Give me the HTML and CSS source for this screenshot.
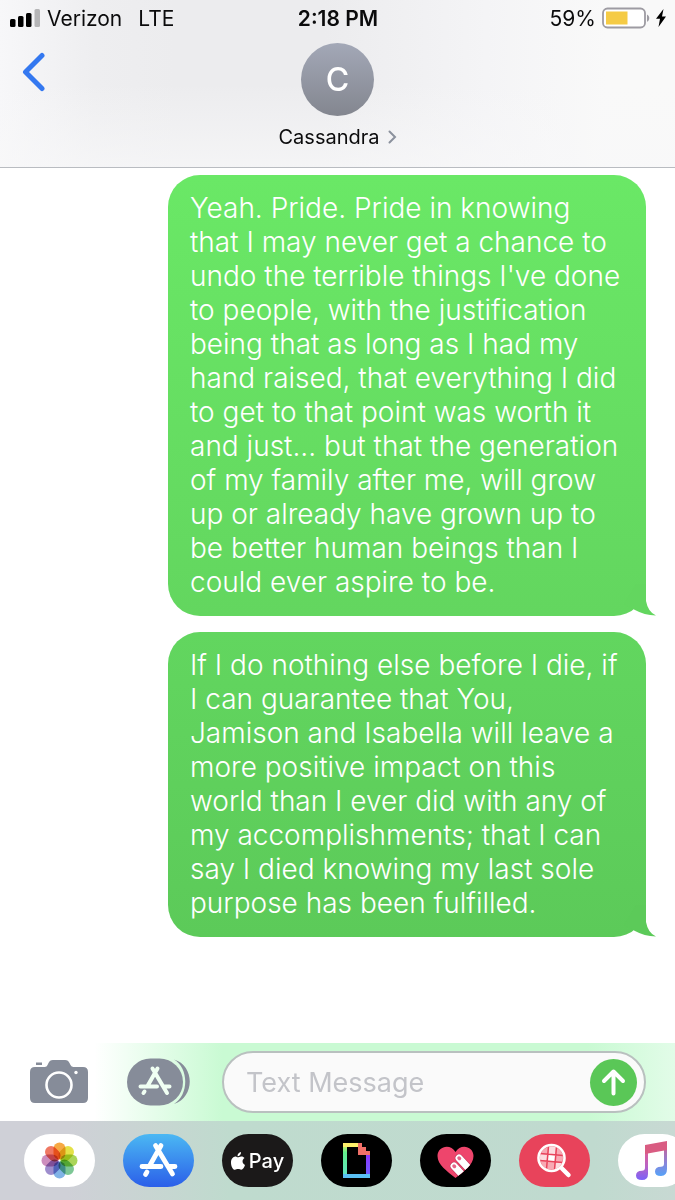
FILE: index.html
```html
<!DOCTYPE html>
<html lang="en">
<head>
    <meta charset="UTF-8">
    <meta name="viewport" content="width=device-width, initial-scale=1.0">
    <title>Cassandra</title>
    <link rel="stylesheet" href="styles.css">
</head>
<body>
    <header class="header">
        <div class="status-bar">
            <div class="status-left">
                <svg class="signal" viewBox="0 0 31 18" aria-hidden="true">
                    <rect x="0" y="10" width="5.500" height="8" rx="1.500"/>
                    <rect x="8" y="7" width="5.500" height="11" rx="1.500"/>
                    <rect x="16" y="4" width="5.500" height="14" rx="1.500"/>
                    <rect x="24.500" y="0" width="5.500" height="18" rx="1.500" fill="#b5b5b7"/>
                </svg>
                <span>Verizon</span>
                <span class="network">LTE</span>
            </div>
            <div class="status-time">2:18 PM</div>
            <div class="status-right">
                <span>59%</span>
                <svg class="battery" viewBox="0 0 48 22" aria-hidden="true">
                    <rect x="1" y="1.500" width="42" height="19" rx="4.500" fill="#fff" stroke="#9d9ba2" stroke-width="1.800"/>
                    <rect x="4" y="4.500" width="21.500" height="13" fill="#f5cb45"/>
                    <path d="M45 7.500c3 1.300 3 6 0 7.300z" fill="#9d9ba2"/>
                </svg>
                <svg class="bolt" viewBox="0 0 10 18" aria-hidden="true">
                    <path d="M7.500 0 0 9.800h4L2.500 18 10 7.500H6z"/>
                </svg>
            </div>
        </div>
        <div class="nav">
            <button class="back" type="button" aria-label="Back">
                <svg viewBox="0 0 24 40"><path d="M20 3.500 3.500 20 20 36.500"/></svg>
            </button>
            <a class="contact" href="#">
                <span class="avatar">C</span>
                <span class="contact-name">Cassandra
                    <svg class="chevron" viewBox="0 0 9 14" aria-hidden="true"><path d="M1.500 1.500 7 7l-5.500 5.500"/></svg>
                </span>
            </a>
        </div>
    </header>

    <main class="thread">
        <div class="bubble bubble-first">
            Yeah. Pride. Pride in knowing<br>
            that I may never get a chance to<br>
            undo the terrible things I've done<br>
            to people, with the justification<br>
            being that as long as I had my<br>
            hand raised, that everything I did<br>
            to get to that point was worth it<br>
            and just... but that the generation<br>
            of my family after me, will grow<br>
            up or already have grown up to<br>
            be better human beings than I<br>
            could ever aspire to be.
            <svg class="tail" viewBox="0 0 32 32" aria-hidden="true"><path d="M12 0H22V17Q24 28 32 31.500Q20 31 11 26L0 20z"/></svg>
        </div>
        <div class="bubble bubble-second">
            If I do nothing else before I die, if<br>
            I can guarantee that You,<br>
            Jamison and Isabella will leave a<br>
            more positive impact on this<br>
            world than I ever did with any of<br>
            my accomplishments; that I can<br>
            say I died knowing my last sole<br>
            purpose has been fulfilled.
            <svg class="tail" viewBox="0 0 32 32" aria-hidden="true"><path d="M12 0H22V17Q24 28 32 31.500Q20 31 11 26L0 20z"/></svg>
        </div>
    </main>

    <form class="composer">
        <button class="tool camera" type="button" aria-label="Camera">
            <svg viewBox="0 0 58 44">
                <rect x="6" y="2.500" width="6" height="2.500" fill="#868c99"/>
                <path fill="#868c99" d="M5 7h9c3 0 3-1 4.500-4 1-2 2-3 4.500-3h12c2.500 0 3.500 1 4.500 3 1.500 3 2 4 5 4H53q5 0 5 5v26q0 5-5 5H5q-5 0-5-5V12q0-5 5-5z"/>
                <circle cx="29" cy="25" r="12.500" fill="none" stroke="#fff" stroke-width="2.600"/>
                <circle cx="46" cy="12.500" r="1.700" fill="#fff"/>
            </svg>
        </button>
        <button class="tool apps" type="button" aria-label="Apps">
            <svg viewBox="0 0 63 48">
                <path d="M47 1.500c21 6 21 38 0 44.500 15-9 15-36 0-44.500z" fill="#868c99"/>
                <rect x="0" y="0.500" width="56" height="47" rx="23.500" fill="#868c99"/>
                <g fill="none" stroke="#f0fff3" stroke-width="4" stroke-linecap="round">
                    <path d="M25.500 10.500 40 35M30.500 10.500 20.500 28M13.500 28.500H30M37 28.500h5.500M17.500 33.500l-1 1.500"/>
                </g>
            </svg>
        </button>
        <div class="message-box">
            <input class="message-input" type="text" placeholder="Text Message" aria-label="Text Message">
            <button class="send" type="submit" aria-label="Send">
                <svg viewBox="0 0 47 47"><path d="M23.500 34.500V12.500M14 22l9.500-9.500L33 22"/></svg>
            </button>
        </div>
    </form>

    <nav class="app-strip">
        <a class="app photos" href="#" aria-label="Photos">
            <svg viewBox="0 0 71 53">
                <g transform="translate(35.500 26.500)">
                    <rect class="petal" x="-6" y="-18" width="12" height="17" rx="6" fill="#f59a23"/>
                    <rect class="petal" x="-6" y="-18" width="12" height="17" rx="6" fill="#dfdc28" transform="rotate(45)"/>
                    <rect class="petal" x="-6" y="-18" width="12" height="17" rx="6" fill="#9bce3c" transform="rotate(90)"/>
                    <rect class="petal" x="-6" y="-18" width="12" height="17" rx="6" fill="#66bd82" transform="rotate(135)"/>
                    <rect class="petal" x="-6" y="-18" width="12" height="17" rx="6" fill="#6ba6e2" transform="rotate(180)"/>
                    <rect class="petal" x="-6" y="-18" width="12" height="17" rx="6" fill="#8d79c5" transform="rotate(225)"/>
                    <rect class="petal" x="-6" y="-18" width="12" height="17" rx="6" fill="#c47ab2" transform="rotate(270)"/>
                    <rect class="petal" x="-6" y="-18" width="12" height="17" rx="6" fill="#ed6047" transform="rotate(315)"/>
                </g>
            </svg>
        </a>
        <a class="app store" href="#" aria-label="App Store">
            <svg viewBox="0 0 71 53">
                <path fill="none" stroke="#fff" stroke-width="4.800" stroke-linecap="round" d="M32.500 11.500 49.500 40M38 11.500 26.500 32M19 32.500h19M45 32.500h7M24 38l-1.500 2.500"/>
            </svg>
        </a>
        <a class="app pay" href="#" aria-label="Apple Pay">
            <svg class="apple" viewBox="0 0 14 18" aria-hidden="true">
                <path d="M10 0c.2 2.400-1.500 4.200-3.500 4.200C6.300 2 8 .3 10 0zM6.900 5.300c.8 0 1.900-1 3.500-.9 1.300 0 2.500.7 3.100 1.700-2.900 1.700-2.300 5.700.5 6.900-.7 2.200-2.200 4.700-3.700 4.800-1.200 0-1.600-.7-3.200-.7-1.500 0-2 .7-3.200.7C1.800 17.800 0 14 0 10.700 0 6.800 2.300 4.600 4.300 4.500c1 0 2 .8 2.600.8z"/>
            </svg>
            <span>Pay</span>
        </a>
        <a class="app giphy" href="#" aria-label="Giphy">
            <svg viewBox="0 0 71 53" shape-rendering="crispEdges">
                <defs>
                    <linearGradient id="giphy-left" x2="0" y2="1"><stop stop-color="#fff35c"/><stop offset=".3" stop-color="#63f08c"/><stop offset="1" stop-color="#5fe3c0"/></linearGradient>
                    <linearGradient id="giphy-right" x2="0" y2="1"><stop stop-color="#8b36ff"/><stop offset="1" stop-color="#6f5cff"/></linearGradient>
                </defs>
                <path d="M22 9h4v31h-4z" fill="url(#giphy-left)"/>
                <path d="M22 9h15v4H22z" fill="#fff06a"/>
                <path d="M45 21h4v19h-4z" fill="url(#giphy-right)"/>
                <path d="M22 40h27v4H22z" fill="#5ac0f5"/>
                <path d="M37 9h4v4h4v4h4v4H37z" fill="#f06f68"/>
            </svg>
        </a>
        <a class="app heart" href="#" aria-label="Digital Touch">
            <svg viewBox="0 0 71 53">
                <defs>
                    <clipPath id="heart-clip"><path d="M35.500 44C27 37 17.500 31 17.500 22c0-10 13-13 18-4 5-9 18-6 18 4 0 9-9.500 15-18 22z"/></clipPath>
                </defs>
                <g clip-path="url(#heart-clip)">
                    <path fill="#ee456c" d="M0 0h71v53H0z"/>
                    <g fill="none" stroke-linecap="round">
                        <path stroke="#b72f55" stroke-width="8" d="m39 24 15 16M34 32l15 16"/>
                        <path stroke="#fff" stroke-width="7" d="m39 24 15 16M34 32l15 16"/>
                        <path stroke="#e56488" stroke-width="3.500" d="m39 24 .5.500M34 32l.5.500"/>
                    </g>
                </g>
            </svg>
        </a>
        <a class="app search" href="#" aria-label="Images">
            <svg viewBox="0 0 71 53">
                <defs><clipPath id="lens-clip"><circle cx="32.500" cy="24" r="11.500"/></clipPath></defs>
                <g clip-path="url(#lens-clip)">
                    <g transform="rotate(5 32.500 24)">
                        <path fill="#f8a9b4" d="M20 12h25v25H20z"/>
                        <path fill="#fff" d="M29 21h7v6h-7z"/>
                        <path fill="#fcdce0" d="M29 12h7v8h-7zM20 21h8v6h-8zM37 28h6v7h-6z"/>
                        <path fill="none" stroke="#e8435b" stroke-width="1.500" d="M28.500 11v26M36.500 11v26M20 20.500h25M20 27.500h25"/>
                    </g>
                </g>
                <circle cx="32.500" cy="24" r="13" fill="none" stroke="#fff" stroke-width="2.600"/>
                <path fill="none" stroke="#fff" stroke-width="4.500" stroke-linecap="round" d="m43 34.500 6.500 6.500"/>
            </svg>
        </a>
        <a class="app music" href="#" aria-label="Music">
            <svg viewBox="0 0 71 53">
                <defs>
                    <linearGradient id="note-left" x2="0" y2="1"><stop stop-color="#ec5b83"/><stop offset=".6" stop-color="#b863c6"/><stop offset="1" stop-color="#7a62f8"/></linearGradient>
                    <linearGradient id="note-right" x2="0" y2="1"><stop stop-color="#d65b88"/><stop offset=".6" stop-color="#8b83d8"/><stop offset="1" stop-color="#56a2f8"/></linearGradient>
                </defs>
                <path fill="url(#note-left)" d="M27 12h3v28q0 6-6 6-6 0-6-4.500 0-4.500 6-4.700 3 0 3-3z"/>
                <path fill="url(#note-right)" d="M46 8h3v27q0 7-6 7-6 0-6-4.500 0-4.500 6-4.700 3 0 3-3z"/>
                <path fill="#d95c82" d="m27 11 22-4v9l-22 4z"/>
            </svg>
        </a>
    </nav>
</body>
</html>
```

FILE: styles.css
```css
* {
    box-sizing: border-box;
}
body {
    margin: 0;
    min-height: 100vh;
    display: flex;
    flex-direction: column;
    overflow-x: hidden;
    font-family: Inter, "Liberation Sans", sans-serif;
    background-color: #fff;
    color: #0b0b0c;
}
button {
    padding: 0;
    border: none;
    background: none;
    cursor: pointer;
}
a {
    color: inherit;
    text-decoration: none;
}
svg {
    display: block;
}

/* Header */
.header {
    padding-bottom: 18px;
    border-bottom: 1px solid #b9bcc1;
    background:
        linear-gradient(rgba(248, 248, 249, 0) 50%, rgba(248, 248, 249, 0.7)),
        linear-gradient(to right, #f7f7f9, #eeeef0 14%, #ececee 26%, #ececee 48%, #f4f4f6 72%, #f9f9f9 90%);
}
.status-bar {
    display: grid;
    grid-template-columns: 1fr auto 1fr;
    align-items: center;
    height: 36px;
    padding: 0 9px 0 10px;
    font-size: 21px;
}
.status-left,
.status-right {
    display: flex;
    align-items: center;
    gap: 6px;
}
.status-right {
    justify-content: flex-end;
}
.signal {
    width: 31px;
    height: 18px;
}
.network {
    margin-left: 10px;
}
.status-time {
    font-weight: 600;
}
.battery {
    width: 48px;
    height: 22px;
}
.bolt {
    width: 10px;
    height: 18px;
}
.nav {
    display: grid;
    grid-template-columns: 1fr auto 1fr;
    align-items: start;
    padding: 7px 22px 0;
}
.back {
    justify-self: start;
}
.back svg {
    width: 24px;
    height: 40px;
    margin-top: 9px;
    fill: none;
    stroke: #3478f0;
    stroke-width: 5;
    stroke-linecap: round;
    stroke-linejoin: round;
}
.contact {
    display: flex;
    flex-direction: column;
    align-items: center;
    gap: 9px;
}
.avatar {
    display: flex;
    align-items: center;
    justify-content: center;
    width: 73px;
    height: 73px;
    border-radius: 50%;
    background: linear-gradient(#a3a8b7, #83868f);
    color: #fff;
    font-size: 32px;
    font-weight: 500;
}
.contact-name {
    display: flex;
    align-items: center;
    gap: 8px;
    font-size: 20px;
    line-height: 24px;
}
.chevron {
    width: 9px;
    height: 14px;
    fill: none;
    stroke: #8b919d;
    stroke-width: 2;
    stroke-linecap: round;
}

/* Messages */
.thread {
    flex: 1;
    display: flex;
    flex-direction: column;
    align-items: flex-end;
    gap: 16px;
    padding: 7px 29px 20px;
}
.bubble {
    position: relative;
    width: 478px;
    max-width: 100%;
    padding: 16px 22px 17px;
    border-radius: 32px;
    color: #fff;
    font-size: 28px;
    font-weight: 300;
    line-height: 34px;
    white-space: nowrap;
}
.bubble-first {
    background: linear-gradient(#6ae866, #63d65f);
}
.bubble-second {
    background: linear-gradient(#62d65f, #5cca59);
}
.tail {
    position: absolute;
    right: -10px;
    bottom: 0;
    width: 32px;
    height: 32px;
}
.bubble-first .tail {
    fill: #63d65f;
}
.bubble-second .tail {
    fill: #5cca59;
}

/* Composer */
.composer {
    display: flex;
    align-items: center;
    padding: 8px 29px 8px 30px;
    background: linear-gradient(to right, #fff 14%, #e5fdea 23%, #c9fad3 33%, #c9fad3 87%, #e2fce8);
}
.tool {
    flex: none;
}
.camera svg {
    width: 58px;
    height: 44px;
}
.apps {
    margin: 0 32px 0 39px;
}
.apps svg {
    width: 63px;
    height: 48px;
}
.message-box {
    flex: 1;
    display: flex;
    align-items: center;
    min-width: 0;
    height: 62px;
    padding: 0 7px 0 22px;
    border: 2px solid #b9c0bf;
    border-radius: 31px;
    background-color: #fafafa;
}
.message-input {
    flex: 1;
    min-width: 0;
    padding: 0;
    border: none;
    outline: none;
    background: none;
    font-family: inherit;
    font-size: 27px;
}
.message-input::placeholder {
    color: #c3c4c9;
    opacity: 1;
}
.send {
    flex: none;
    width: 47px;
    height: 47px;
    border-radius: 50%;
    background-color: #5ac757;
}
.send svg {
    fill: none;
    stroke: #fff;
    stroke-width: 4;
    stroke-linecap: round;
    stroke-linejoin: round;
}

/* App strip */
.app-strip {
    display: flex;
    gap: 28px;
    height: 79px;
    padding: 13px 0 0 24px;
    overflow: hidden;
    background: linear-gradient(to right, #cfd0d7 10%, #c8d5d2 22%, #bfdbce 34%, #c0dacf 88%, #c8d9d3);
}
.app {
    flex: none;
    width: 71px;
    height: 53px;
    border-radius: 27px;
    background-color: #000;
}
.photos,
.music {
    background-color: #fff;
}
.petal {
    mix-blend-mode: multiply;
    opacity: 0.85;
}
.store {
    background: linear-gradient(#4bb8f3, #2b5fe9);
}
.pay {
    display: flex;
    align-items: center;
    justify-content: center;
    gap: 4px;
    background-color: #1b1919;
    color: #fff;
    font-size: 20px;
    font-weight: 500;
}
.apple {
    width: 14px;
    height: 18px;
    fill: #fff;
}
.search {
    background-color: #e8435b;
}
```
